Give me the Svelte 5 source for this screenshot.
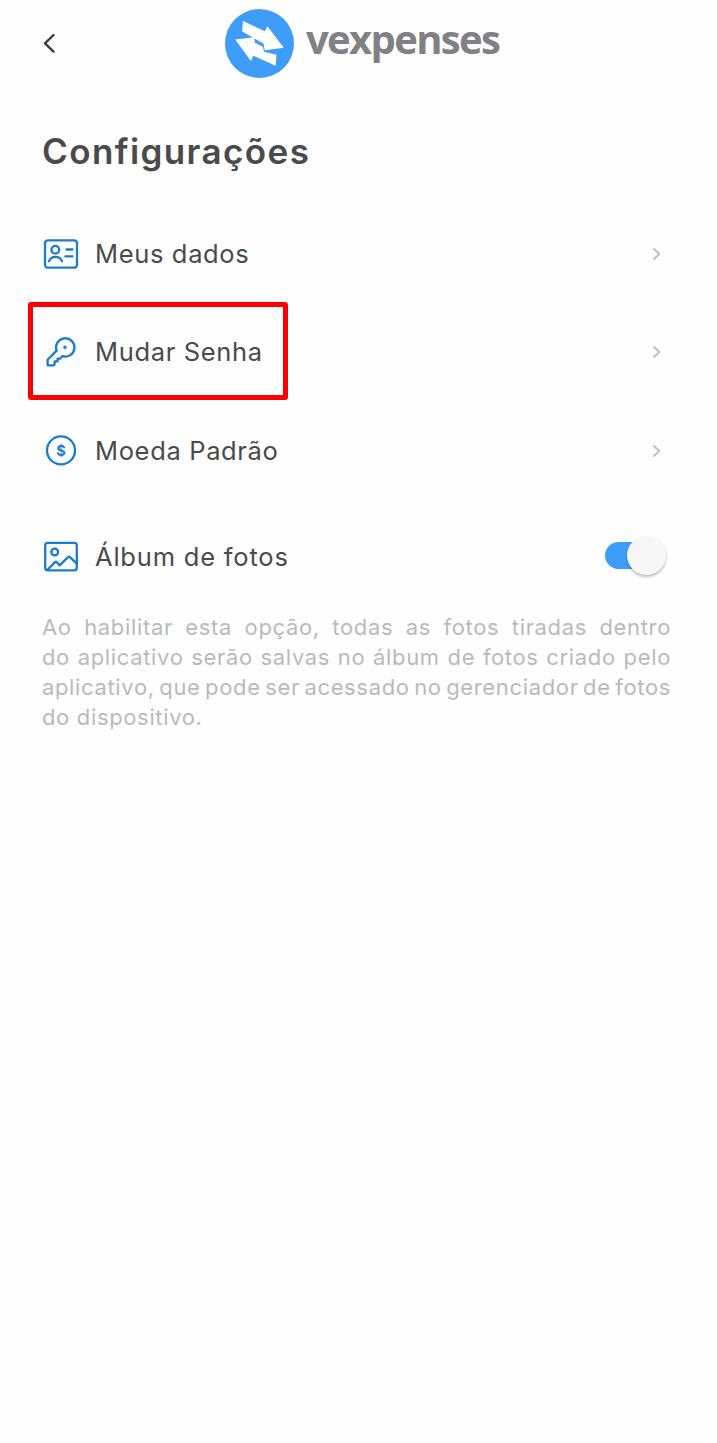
<script>
    let savePhotos = $state(true);

    const links = [
        { id: "profile", label: "Meus dados" },
        { id: "password", label: "Mudar Senha", highlighted: true },
        { id: "currency", label: "Moeda Padrão" },
    ];

    const hint = [
        "Ao habilitar esta opção, todas as fotos tiradas dentro",
        "do aplicativo serão salvas no álbum de fotos criado pelo",
        "aplicativo, que pode ser acessado no gerenciador de fotos",
        "do dispositivo.",
    ];
</script>

{#snippet icon(id)}
    <svg class="icon" viewBox="0 0 36 36" aria-hidden="true">
        {#if id === "profile"}
            <rect x="2" y="4.3" width="32" height="27.4" rx="3" />
            <circle cx="12.3" cy="13.7" r="3.9" />
            <path d="M6 25.2C7.2 22 9.4 20.8 12.5 20.8S17.8 22 19 25.2M23.5 13.5h6M22.3 20.3h7.3" />
        {:else if id === "password"}
            <path d="M13.6 16.6A9.2 9.2 0 1 1 19.4 22.2L17 24.6H14.6V27.4H11.6V30.4L10.6 31.3H4.6V25.8Z" />
            <circle class="dot" cx="22" cy="13.3" r="1.7" />
        {:else if id === "currency"}
            <circle cx="18" cy="17.4" r="14" />
            <text x="18" y="22.6">$</text>
        {:else}
            <rect x="2.2" y="3.8" width="31.6" height="27.6" rx="2.6" />
            <circle cx="11.7" cy="13" r="3.4" />
            <path d="M4.4 31 12 23.1Q12.8 22.3 13.6 23.1L16.6 26.4 25.1 18.2Q26 17.4 26.9 18.2L33.6 24.4" />
        {/if}
    </svg>
{/snippet}

<header>
    <button class="back" aria-label="Voltar">
        <svg viewBox="0 0 12 20"><path d="M10.5 2 2 10.3 10.5 18.6" /></svg>
    </button>
    <div class="logo">
        <svg viewBox="30 26 208 208" aria-hidden="true">
            <circle cx="134" cy="130" r="104" />
            <path d="M84 62 150 93 158 78 207 143 150 150 146 130 82 94Z" />
            <path d="M61 118 118 111 120 128 144 140 148 155 185 164 183 197 116 167 108 183Z" />
        </svg>
        <span>vexpenses</span>
    </div>
</header>

<main>
    <h1>Configurações</h1>

    <nav>
        {#each links as link}
            <button class="row {link.id}" class:highlighted={link.highlighted}>
                {@render icon(link.id)}
                <span class="label">{link.label}</span>
                <svg class="chevron" viewBox="0 0 10 14"><path d="M2 2 7.3 7 2 12" /></svg>
            </button>
        {/each}
    </nav>

    <div class="row album">
        {@render icon("album")}
        <span class="label">Álbum de fotos</span>
        <button
            class="switch"
            class:on={savePhotos}
            role="switch"
            aria-checked={savePhotos}
            aria-label="Álbum de fotos"
            onclick={() => (savePhotos = !savePhotos)}
        >
            <span class="knob"></span>
        </button>
    </div>

    <p>
        {#each hint as line}
            <span>{line}</span>
        {/each}
    </p>
</main>

<style>
    :global(body) {
        background: #fefefe;
        font-family: Inter, "Open Sans", sans-serif;
        color: #4a4a4c;
    }

    button {
        padding: 0;
        border: 0;
        background: none;
        font: inherit;
        color: inherit;
        text-align: left;
    }

    svg {
        display: block;
        fill: none;
        stroke-linecap: round;
        stroke-linejoin: round;
    }

    header {
        display: grid;
        grid-template-columns: 182px 1fr;
        align-items: center;
        height: 86px;
        padding-left: 43px;
    }

    .back svg {
        width: 12px;
        height: 20px;
        stroke: #3c3c3e;
        stroke-width: 2.4;
    }

    /* logo */
    .logo {
        display: flex;
        align-items: center;
        gap: 12px;
    }

    .logo svg {
        width: 69px;
        height: 69px;
    }

    .logo circle {
        fill: #3f9dfa;
    }

    .logo path {
        fill: #fff;
    }

    .logo span {
        margin-top: -8px;
        font: 700 40px/50px "Open Sans", sans-serif;
        letter-spacing: -1.65px;
        color: #808184;
    }

    main {
        padding: 0 46px 0 42px;
    }

    h1 {
        margin: 40px 0 0;
        font-size: 35px;
        font-weight: 600;
        line-height: 50px;
        letter-spacing: 1.4px;
    }

    /* rows */
    nav {
        display: flex;
        flex-direction: column;
        margin-top: 29px;
    }

    .row {
        position: relative;
        display: flex;
        align-items: center;
        height: 98px;
        padding: 0 9px 0 1px;
    }

    .row.currency {
        height: 100px;
    }

    .highlighted::before {
        content: "";
        position: absolute;
        left: -14px;
        top: -1px;
        width: 250px;
        height: 88px;
        border: 5px solid #fe0000;
        border-radius: 3px;
    }

    .icon {
        width: 36px;
        height: 36px;
        stroke: #1a7cce;
        stroke-width: 2.3;
    }

    .icon text {
        fill: #1a7cce;
        stroke: none;
        font-size: 14.5px;
        font-weight: 700;
        text-anchor: middle;
    }

    .icon .dot {
        fill: #1a7cce;
        stroke: none;
    }

    .label {
        flex: 1;
        margin-left: 16px;
        font-size: 25.5px;
        line-height: 36px;
        letter-spacing: 0.65px;
    }

    .chevron {
        width: 10px;
        height: 14px;
        stroke: #bcbcbc;
        stroke-width: 1.8;
    }

    .album {
        height: 60px;
        margin-top: 26px;
        padding-right: 5px;
    }

    .album .label {
        letter-spacing: 0.8px;
    }

    .switch {
        display: flex;
        align-items: center;
        width: 61px;
        height: 27px;
        margin-bottom: 3px;
        border-radius: 14px;
        background: linear-gradient(to right, #bbb 50px, transparent 50px);
    }

    .switch.on {
        justify-content: flex-end;
        background: linear-gradient(to right, #3f9dfa 45px, transparent 45px);
    }

    .knob {
        flex: none;
        width: 39px;
        height: 39px;
        border-radius: 50%;
        background: #f7f7f7;
        box-shadow: 0 2px 3px #0004;
    }

    p {
        margin: 25px 0 0;
        font-size: 22px;
        line-height: 30px;
        letter-spacing: 0.65px;
        word-spacing: -3px;
        color: #bababa;
    }

    p span {
        display: block;
        white-space: nowrap;
        text-align-last: justify;
    }

    p span:last-child {
        text-align-last: left;
        word-spacing: 0;
    }
</style>
